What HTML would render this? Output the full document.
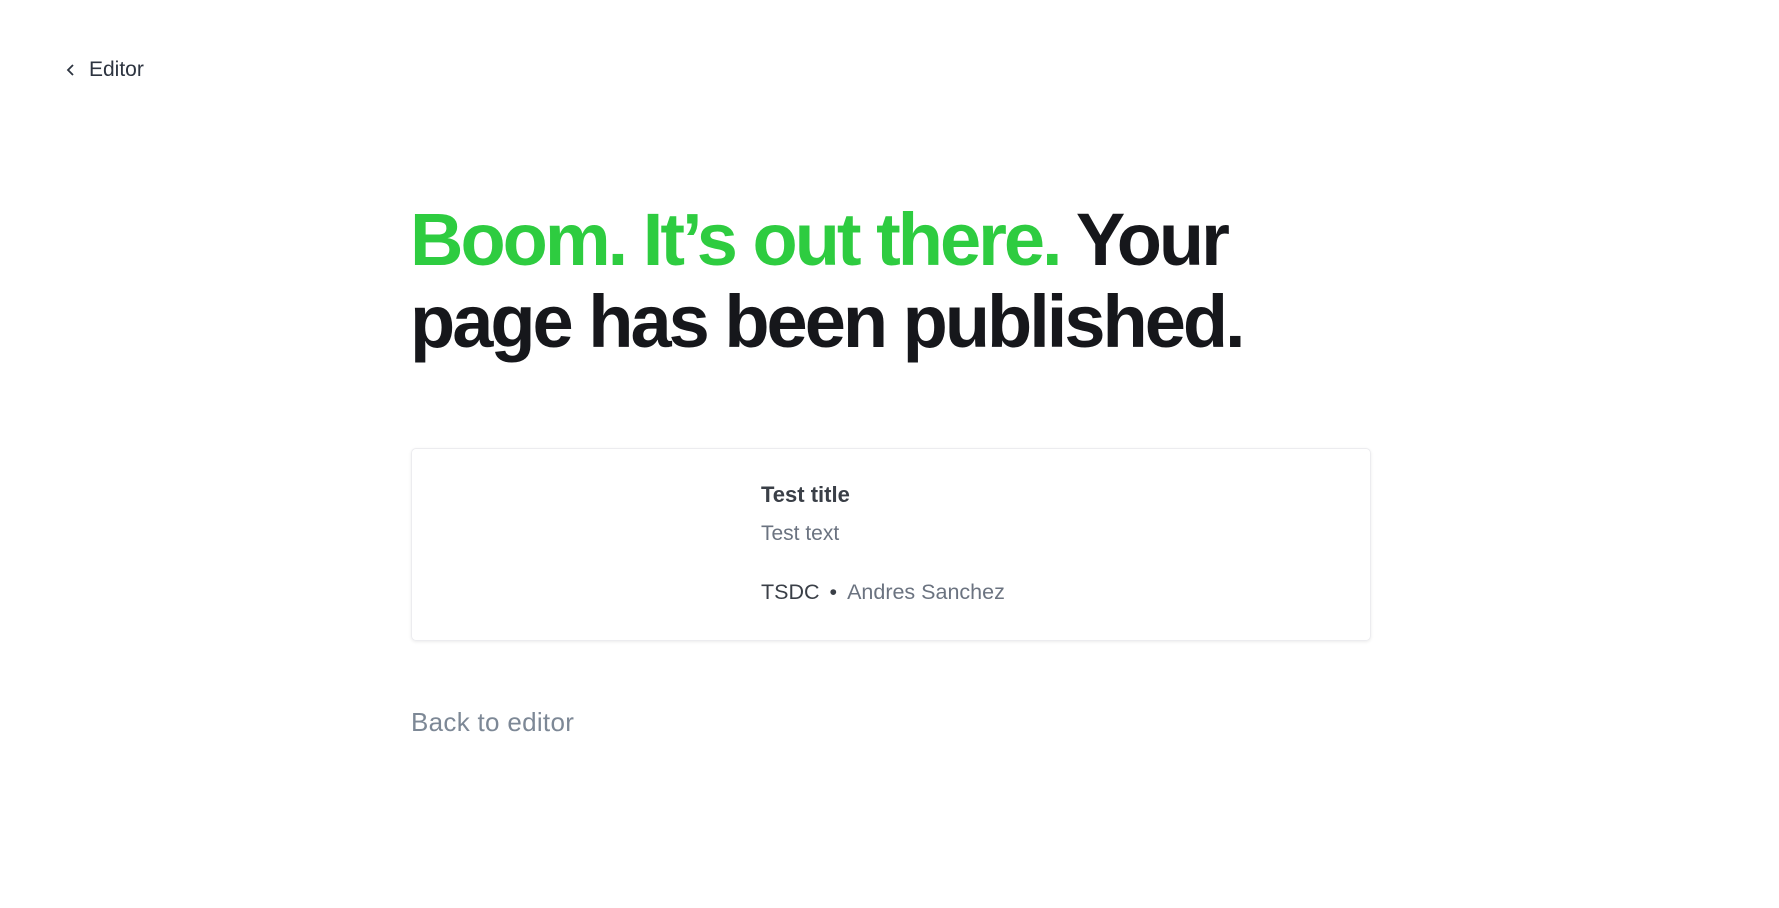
<!DOCTYPE html>
<html><head><meta charset="utf-8"><style>
*{margin:0;padding:0;box-sizing:border-box}
body{width:1779px;height:908px;background:#fff;font-family:"Liberation Sans",sans-serif;position:relative;overflow:hidden}
.nav{position:absolute;left:66px;top:58px;font-size:21px;color:#2d3440;display:flex;align-items:center}
.nav svg{margin-right:13px}
h1{position:absolute;left:410px;top:199px;width:900px;font-size:74px;line-height:82px;font-weight:700;color:#16171b;letter-spacing:-3px}
h1 span{color:#2ecc40}
.card{position:absolute;left:411px;top:448px;width:960px;height:193px;border:1px solid #ececef;border-radius:5px;box-shadow:0 1px 3px rgba(0,0,0,.08)}
.t{position:absolute;left:349px;top:33px;font-size:22px;font-weight:700;color:#3a3f47}
.s{position:absolute;left:349px;top:73px;font-size:21px;color:#6b7380}
.m{position:absolute;left:349px;top:131px;font-size:21.5px;color:#3a3f47}
.m .a{color:#6b7380}
.m .d{margin:0 10px}
.back{position:absolute;left:411px;top:707px;font-size:26px;color:#7d8896;letter-spacing:.3px}
</style></head><body>
<div class="nav"><svg width="10" height="14" viewBox="0 0 10 14"><path d="M7 2L2 7l5 5" fill="none" stroke="#2d3440" stroke-width="1.8"/></svg>Editor</div>
<h1><span>Boom. It’s out there.</span> Your page has been published.</h1>
<div class="card">
<div class="t">Test title</div>
<div class="s">Test text</div>
<div class="m">TSDC<span class="d">•</span><span class="a">Andres Sanchez</span></div>
</div>
<div class="back">Back to editor</div>
</body></html>
